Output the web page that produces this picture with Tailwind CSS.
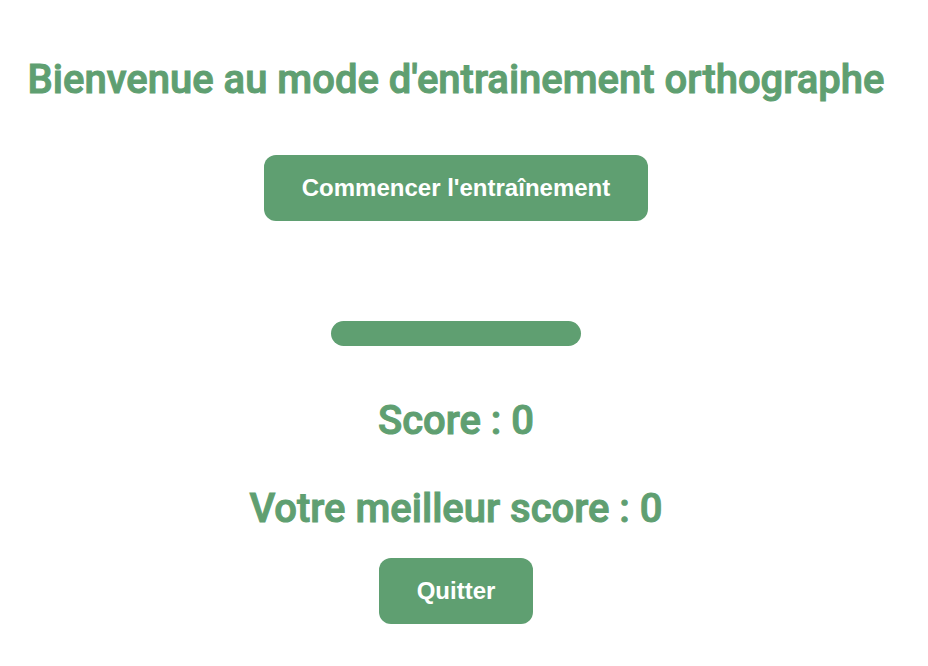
<!DOCTYPE html>
<html lang="fr">
<head>
<meta charset="utf-8">
<meta name="viewport" content="width=device-width, initial-scale=1">
<title>Entraînement orthographe</title>
<script src="https://cdn.jsdelivr.net/npm/@tailwindcss/browser@4"></script>
</head>
<body class="bg-white font-[Roboto,sans-serif] text-[#5f9f71]">
<main class="flex flex-col items-center pt-14 pr-4 text-center">
  <h1 class="text-[40px] leading-[48px] font-medium [-webkit-text-stroke:1px_#5f9f71]">Bienvenue au mode d'entrainement orthographe</h1>
  <button type="button" class="mt-[51px] rounded-xl bg-[#5f9f71] px-[38px] py-[18px] font-['Liberation_Sans',Arial,sans-serif] text-2xl leading-[30px] font-bold text-white">Commencer l'entraînement</button>
  <div class="mt-[100px] h-[25px] w-[250px] rounded-full bg-[#5f9f71]"></div>
  <h2 class="mt-[51px] text-[40px] leading-[48px] font-medium [-webkit-text-stroke:1px_#5f9f71]">Score : 0</h2>
  <h2 class="mt-10 text-[40px] leading-[48px] font-medium [-webkit-text-stroke:1px_#5f9f71]">Votre meilleur score : 0</h2>
  <button type="button" class="mt-[25px] rounded-xl bg-[#5f9f71] px-[38px] py-[18px] font-['Liberation_Sans',Arial,sans-serif] text-2xl leading-[30px] font-bold text-white">Quitter</button>
</main>
</body>
</html>
